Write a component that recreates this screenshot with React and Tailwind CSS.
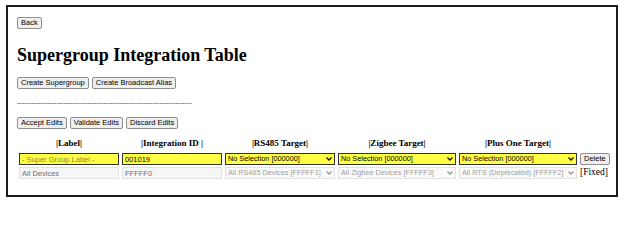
import { useState } from "react"

const serif = "font-['Liberation_Serif','Times_New_Roman',serif]"
const sans = "font-['Liberation_Sans',Arial,sans-serif]"

function Btn({ children }) {
  return (
    <button className={`${sans} block h-[12px] px-[3px] text-[7.5px] leading-none text-black bg-[#efefef] border border-[#8f8f8f] rounded-[2px]`}>
      {children}
    </button>
  )
}

function Chevron({ muted }) {
  return (
    <svg width="6" height="4" viewBox="0 0 6 4" className="absolute right-[3px] top-[4px] pointer-events-none">
      <path d="M0.5 0.5 L3 3 L5.5 0.5" fill="none" stroke={muted ? "#9a9a9a" : "#111"} strokeWidth="1.3" />
    </svg>
  )
}

function Pick({ value, muted }) {
  return (
    <div className="relative h-[12px]">
      <select
        disabled={muted}
        defaultValue={value}
        className={`${sans} block appearance-none w-full h-[12px] pl-[2px] pr-[9px] py-0 text-[7.3px] leading-none rounded-none ${
          muted ? "bg-[#fafafa] border border-[#e2e2e2] text-[#a0a0a0]" : "bg-[#ffff44] border border-[#333] text-black"
        }`}
      >
        <option>{value}</option>
      </select>
      <Chevron muted={muted} />
    </div>
  )
}

const field = `${sans} block w-full h-[12px] px-[2px] py-0 text-[7.5px] leading-none outline-none`

export default function App() {
  const [label, setLabel] = useState("")
  const [id, setId] = useState("001019")

  return (
    <div className="w-[640px] h-[205px] bg-white pt-[5px] pl-[6px] leading-none">
      <div className="w-[612px] h-[192px] border-2 border-[#1c1c1c] pl-[9px] pt-[10px] flex flex-col items-start">
        <Btn>Back</Btn>

        <h1 className={`${serif} text-[18px] font-bold text-black leading-none mt-[17px]`}>
          Supergroup Integration Table
        </h1>

        <div className="flex gap-[3px] mt-[13px]">
          <Btn>Create Supergroup</Btn>
          <Btn>Create Broadcast Alias</Btn>
        </div>

        <div className={`${sans} text-[7px] leading-none text-[#333] mt-[10px]`}>
          ---------------------------------------------------------------------------
        </div>

        <div className="flex gap-[3px] mt-[11px]">
          <Btn>Accept Edits</Btn>
          <Btn>Validate Edits</Btn>
          <Btn>Discard Edits</Btn>
        </div>

        <div className="grid grid-cols-[100px_100px_110px_118px_118px_auto] gap-x-[3px] gap-y-[2px] mt-[10px] ml-[2px] items-center">
          <div className={`${serif} text-[9px] font-bold text-center leading-none pb-[3px]`}>|Label|</div>
          <div className={`${serif} text-[9px] font-bold text-center leading-none pb-[3px]`}>|Integration ID |</div>
          <div className={`${serif} text-[9px] font-bold text-center leading-none pb-[3px]`}>|RS485 Target|</div>
          <div className={`${serif} text-[9px] font-bold text-center leading-none pb-[3px]`}>|Zigbee Target|</div>
          <div className={`${serif} text-[9px] font-bold text-center leading-none pb-[3px]`}>|Plus One Target|</div>
          <div />

          <input
            value={label}
            onChange={(e) => setLabel(e.target.value)}
            placeholder="- Super Group Label -"
            className={`${field} bg-[#ffff44] border border-[#333] placeholder:text-[#8a8a3a]`}
          />
          <input
            value={id}
            onChange={(e) => setId(e.target.value)}
            className={`${field} bg-[#ffff44] border border-[#333] text-black`}
          />
          <Pick value="No Selection [000000]" />
          <Pick value="No Selection [000000]" />
          <Pick value="No Selection [000000]" />
          <Btn>Delete</Btn>

          <input disabled value="All Devices" className={`${field} bg-[#f6f6f6] border border-[#e2e2e2] text-[#707070]`} />
          <input disabled value="FFFFF0" className={`${field} bg-[#f6f6f6] border border-[#e2e2e2] text-[#707070]`} />
          <Pick muted value="All RS485 Devices [FFFFF1]" />
          <Pick muted value="All Zigbee Devices [FFFFF3]" />
          <Pick muted value="All RTS (Deprecated) [FFFFF2]" />
          <div className={`${serif} text-[9.5px] leading-none text-black`}>[Fixed]</div>
        </div>
      </div>
    </div>
  )
}
